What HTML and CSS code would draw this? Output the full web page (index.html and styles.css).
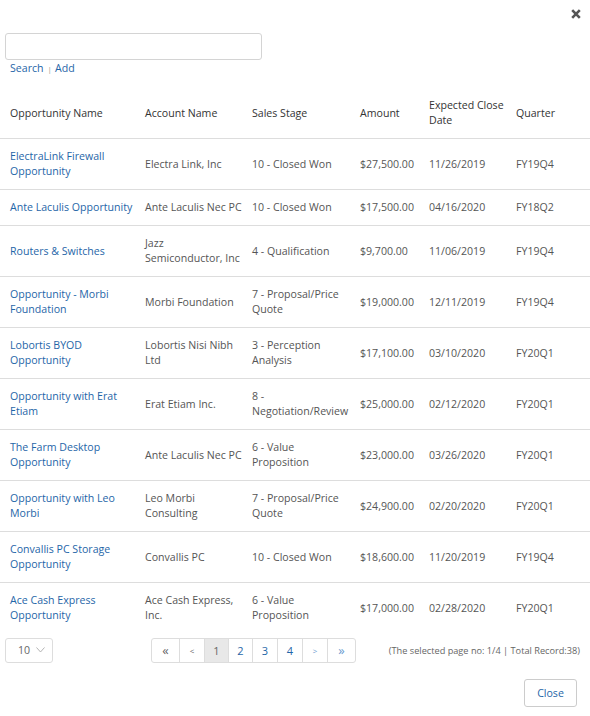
FILE: index.html
```html
<!DOCTYPE html>
<html lang="en">
<head>
<meta charset="utf-8">
<title>Opportunity Lookup</title>
<link rel="stylesheet" href="styles.css">
</head>
<body>
<div class="modal">
  <div class="topbar">
    <button class="close-x" aria-label="Close">
      <svg width="10" height="10" viewBox="0 0 10 10"><path d="M1.2 1.2 L8.8 8.8 M8.8 1.2 L1.2 8.8" stroke="#555" stroke-width="2.6" fill="none"/></svg>
    </button>
  </div>
  <div class="search">
    <input type="text" class="search-input">
  </div>
  <div class="search-links"><a href="#">Search</a><span class="sep">|</span><a href="#">Add</a></div>

  <table class="grid">
    <colgroup>
      <col class="c1"><col class="c2"><col class="c3"><col class="c4"><col class="c5"><col class="c6">
    </colgroup>
    <thead>
      <tr>
        <th>Opportunity Name</th>
        <th>Account Name</th>
        <th>Sales Stage</th>
        <th>Amount</th>
        <th>Expected Close Date</th>
        <th>Quarter</th>
      </tr>
    </thead>
    <tbody>
      <tr><td><a href="#">ElectraLink Firewall Opportunity</a></td><td>Electra Link, Inc</td><td>10 - Closed Won</td><td>$27,500.00</td><td>11/26/2019</td><td>FY19Q4</td></tr>
      <tr><td><a href="#">Ante Laculis Opportunity</a></td><td>Ante Laculis Nec PC</td><td>10 - Closed Won</td><td>$17,500.00</td><td>04/16/2020</td><td>FY18Q2</td></tr>
      <tr><td><a href="#">Routers &amp; Switches</a></td><td>Jazz Semiconductor, Inc</td><td>4 - Qualification</td><td>$9,700.00</td><td>11/06/2019</td><td>FY19Q4</td></tr>
      <tr><td><a href="#">Opportunity - Morbi Foundation</a></td><td>Morbi Foundation</td><td>7 - Proposal/Price Quote</td><td>$19,000.00</td><td>12/11/2019</td><td>FY19Q4</td></tr>
      <tr><td><a href="#">Lobortis BYOD Opportunity</a></td><td>Lobortis Nisi Nibh Ltd</td><td>3 - Perception Analysis</td><td>$17,100.00</td><td>03/10/2020</td><td>FY20Q1</td></tr>
      <tr><td><a href="#">Opportunity with Erat Etiam</a></td><td>Erat Etiam Inc.</td><td>8 - Negotiation/Review</td><td>$25,000.00</td><td>02/12/2020</td><td>FY20Q1</td></tr>
      <tr><td><a href="#">The Farm Desktop Opportunity</a></td><td>Ante Laculis Nec PC</td><td>6 - Value Proposition</td><td>$23,000.00</td><td>03/26/2020</td><td>FY20Q1</td></tr>
      <tr><td><a href="#">Opportunity with Leo Morbi</a></td><td>Leo Morbi Consulting</td><td>7 - Proposal/Price Quote</td><td>$24,900.00</td><td>02/20/2020</td><td>FY20Q1</td></tr>
      <tr><td><a href="#">Convallis PC Storage Opportunity</a></td><td>Convallis PC</td><td>10 - Closed Won</td><td>$18,600.00</td><td>11/20/2019</td><td>FY19Q4</td></tr>
      <tr><td><a href="#">Ace Cash Express Opportunity</a></td><td>Ace Cash Express, Inc.</td><td>6 - Value Proposition</td><td>$17,000.00</td><td>02/28/2020</td><td>FY20Q1</td></tr>
    </tbody>
  </table>

  <div class="footer-bar">
    <div class="page-size">
      <span class="page-size-value">10</span>
      <svg class="chev" width="9" height="6" viewBox="0 0 9 6"><polyline points="0.5,0.5 4.5,5 8.5,0.5" fill="none" stroke="#aaa" stroke-width="0.9"/></svg>
    </div>
    <ul class="pager">
      <li class="pg w29 muted dbl">«</li>
      <li class="pg w26 muted small">&lt;</li>
      <li class="pg w25 active">1</li>
      <li class="pg w25">2</li>
      <li class="pg w26">3</li>
      <li class="pg w26">4</li>
      <li class="pg w26 soft small">&gt;</li>
      <li class="pg w29 soft dbl">»</li>
    </ul>
    <div class="page-info">(The selected page no: 1/4 | Total Record:38)</div>
  </div>

  <div class="actions">
    <button class="btn">Close</button>
  </div>
</div>
</body>
</html>
```

FILE: styles.css
```css
* { box-sizing: border-box; }

html, body {
  margin: 0;
  padding: 0;
  background: #fff;
}

body {
  font-family: "Open Sans", "Noto Sans", sans-serif;
  font-size: 10.6px;
  line-height: 15px;
  color: #555;
}

a {
  color: #1f66a8;
  text-decoration: none;
}

.modal {
  width: 590px;
}

.topbar {
  display: flex;
  justify-content: flex-end;
  padding: 9px 9px 0 0;
}

.close-x {
  border: 0;
  background: none;
  padding: 0;
  width: 10px;
  height: 10px;
  display: block;
}

.close-x svg { display: block; }

.search {
  margin-top: 14px;
  padding-left: 5px;
}

.search-input {
  display: block;
  width: 257px;
  height: 27px;
  border: 1px solid #d4d4d4;
  border-radius: 3px;
  font: inherit;
  outline: none;
}

.search-links {
  margin-top: 1px;
  padding-left: 10px;
  height: 15px;
}

.search-links .sep {
  color: #999;
  font-size: 8px;
  margin: 0 3px 0 4px;
}

.grid {
  margin-top: 12px;
  width: 590px;
  border-collapse: collapse;
  table-layout: fixed;
}

.grid .c1 { width: 135px; }
.grid .c2 { width: 107px; }
.grid .c3 { width: 108px; }
.grid .c4 { width: 69px; }
.grid .c5 { width: 87px; }
.grid .c6 { width: 84px; }

.grid th {
  text-align: left;
  font-weight: normal;
  color: #333;
  padding: 10px 0 10px 10px;
  vertical-align: middle;
  border-bottom: 1px solid #ddd;
}

.grid td {
  padding: 10px 0 10px 10px;
  vertical-align: middle;
  border-top: 1px solid #ddd;
}

.grid tbody tr:first-child td { border-top: 0; }

.footer-bar {
  margin-top: 5px;
  display: flex;
  align-items: center;
  padding: 0 10px 0 5px;
  height: 25px;
}

.page-size {
  width: 48px;
  height: 25px;
  border: 1px solid #ddd;
  border-radius: 3px;
  display: flex;
  align-items: center;
  padding-left: 12px;
  color: #666;
}

.page-size .chev {
  margin-left: 6px;
  margin-top: -1px;
}

.pager {
  list-style: none;
  margin: 0 0 0 98px;
  padding: 0;
  display: flex;
}

.pg {
  height: 25px;
  border: 1px solid #ddd;
  margin-left: -1px;
  display: flex;
  align-items: center;
  justify-content: center;
  color: #1f66a8;
  font-size: 11px;
}

.pg:first-child {
  margin-left: 0;
  border-radius: 3px 0 0 3px;
}

.pg:last-child { border-radius: 0 3px 3px 0; }

.w29 { width: 29px; }
.w26 { width: 26px; }
.w25 { width: 25px; }

.pg.muted { color: #666; }
.pg.soft { color: #6a9bd0; }
.pg.small { font-size: 8px; }
.pg.dbl { font-size: 13px; }

.pg.active {
  background: #e8e8e8;
  color: #666;
}

.page-info {
  margin-left: auto;
  font-size: 9.2px;
  color: #666;
}

.actions {
  margin-top: 16px;
  display: flex;
  justify-content: flex-end;
  padding-right: 13px;
}

.btn {
  width: 53px;
  height: 28px;
  border: 1px solid #ccc;
  border-radius: 3px;
  background: #fff;
  color: #1f66a8;
  font: inherit;
  padding: 0;
}
```
